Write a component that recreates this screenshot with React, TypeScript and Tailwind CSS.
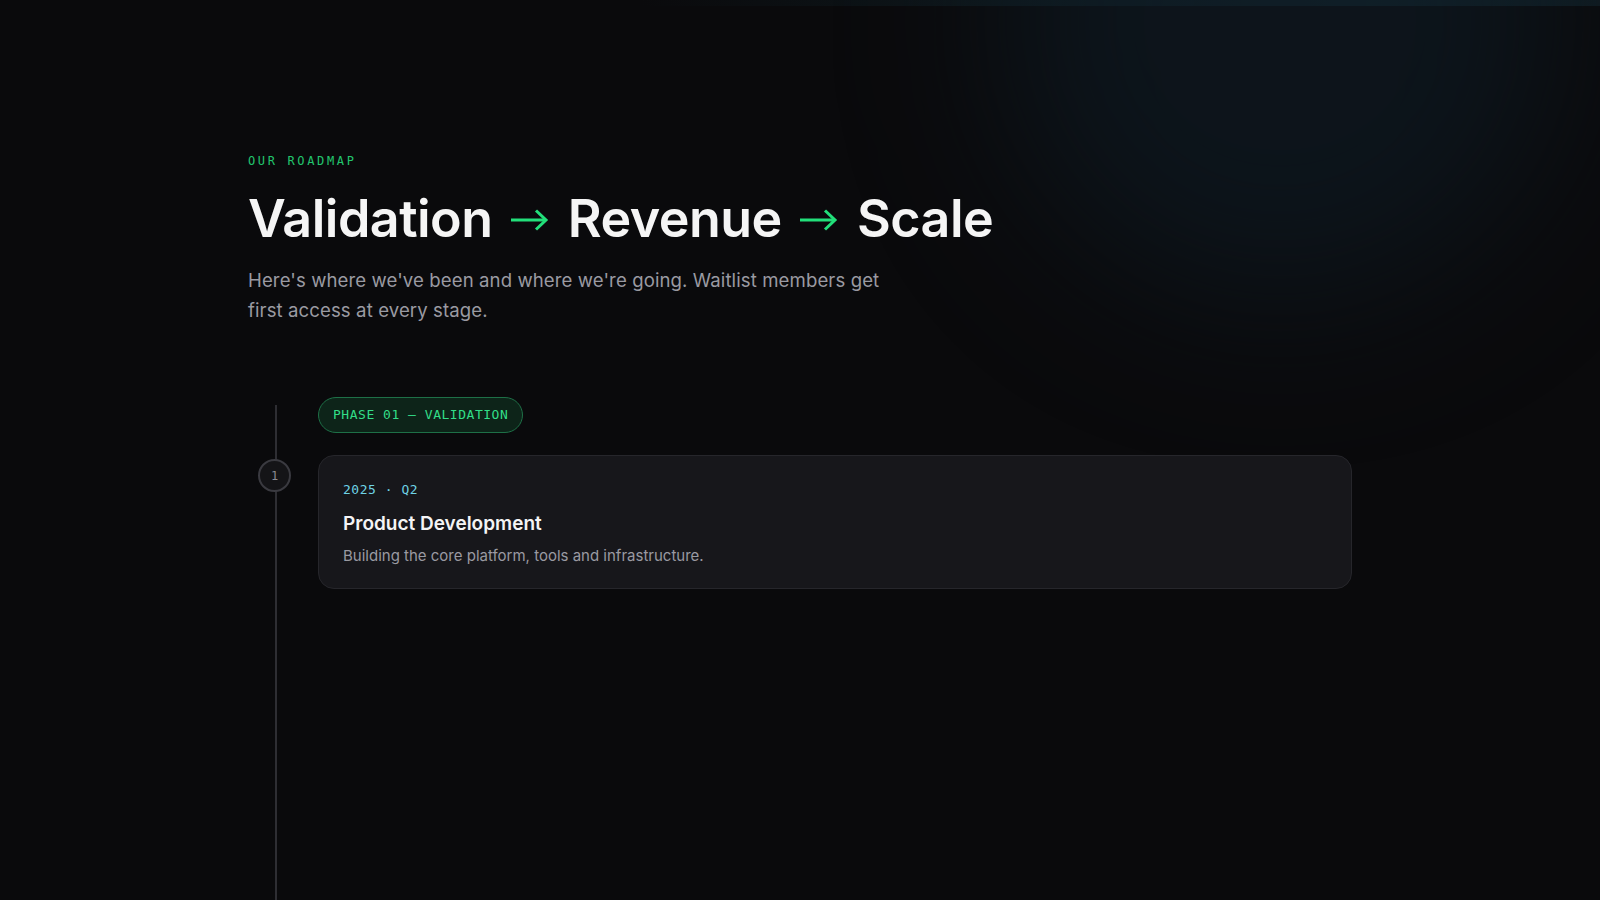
import React from "react";

const phases = [
    {
        label: "PHASE 01 — VALIDATION",
        items: [
            {
                step: 1,
                when: "2025 · Q2",
                title: "Product Development",
                body: "Building the core platform, tools and infrastructure.",
            },
        ],
    },
];

function Arrow() {
    return (
        <svg
            viewBox="0 0 38 22"
            className="mx-[6px] inline-block h-[22px] w-[38px] align-[0.12em] text-[#22e07a]"
            fill="none"
            stroke="currentColor"
            strokeWidth={3}
            strokeLinecap="butt"
            strokeLinejoin="miter"
        >
            <path d="M0 11h35" />
            <path d="M25 1.5l10 9.5-10 9.5" />
        </svg>
    );
}

export default function App() {
    return (
        <div
            className="relative min-h-screen w-full overflow-hidden bg-[#0a0a0c] text-white"
            style={{ fontFamily: "Inter, 'Noto Sans', sans-serif" }}
        >
            {/* top edge strip + soft corner light */}
            <div className="pointer-events-none absolute inset-x-0 top-0 h-[6px] bg-gradient-to-r from-transparent from-40% via-[#10232a] via-85% to-[#0f1a20]" />
            <div className="pointer-events-none absolute -top-[260px] right-[40px] h-[560px] w-[560px] rounded-full bg-[#0f1c26] opacity-60 blur-[80px]" />

            <div className="relative mx-auto max-w-6xl px-6 pt-[152px]">
                <p className="text-[12px] tracking-[0.22em] text-[#22c56e]" style={{ fontFamily: "'DejaVu Sans Mono', monospace" }}>
                    OUR ROADMAP
                </p>
                <h1 className="mt-[20px] text-[52px] font-semibold leading-[1.1] tracking-[-0.01em] text-[#f5f5f5]">
                    Validation <Arrow /> Revenue <Arrow /> Scale
                </h1>
                <p className="mt-[18px] max-w-[640px] text-[18.6px] leading-[30px] tracking-[0.005em] text-[#9a9aa2]">
                    Here's where we've been and where we're going. Waitlist members get first access at every stage.
                </p>

                <div className="relative mt-[72px] pl-[70px] pb-[320px]">
                    <div className="absolute left-[27px] top-[8px] bottom-0 w-[2px] bg-[#2e2e33]" />

                    {phases.map((phase) => (
                        <div key={phase.label}>
                            <span
                                className="inline-flex h-[36px] items-center rounded-full border border-[#1e7047] bg-[#0d2419] px-[14px] text-[13px] tracking-[0.04em] text-[#32de88]"
                                style={{ fontFamily: "'DejaVu Sans Mono', monospace" }}
                            >
                                {phase.label}
                            </span>

                            <div className="mt-[22px] flex flex-col gap-6">
                                {phase.items.map((item) => (
                                    <div key={item.step} className="relative">
                                        <div
                                            className="absolute -left-[60px] top-[4px] flex h-[33px] w-[33px] items-center justify-center rounded-full border-2 border-[#3a3a40] bg-[#141417] text-[12px] text-[#8a8a92]"
                                            style={{ fontFamily: "'DejaVu Sans Mono', monospace" }}
                                        >
                                            {item.step}
                                        </div>
                                        <div className="rounded-2xl border border-[#26262b] bg-[#17171b] px-6 pt-[24px] pb-[20px]">
                                            <p className="text-[13px] tracking-[0.04em] text-[#6fd3e6]" style={{ fontFamily: "'DejaVu Sans Mono', monospace" }}>
                                                {item.when}
                                            </p>
                                            <h3 className="mt-[10px] text-[19px] font-semibold text-[#f4f4f5]">{item.title}</h3>
                                            <p className="mt-[7px] text-[15px] text-[#9a9aa2]">{item.body}</p>
                                        </div>
                                    </div>
                                ))}
                            </div>
                        </div>
                    ))}
                </div>
            </div>
        </div>
    );
}
